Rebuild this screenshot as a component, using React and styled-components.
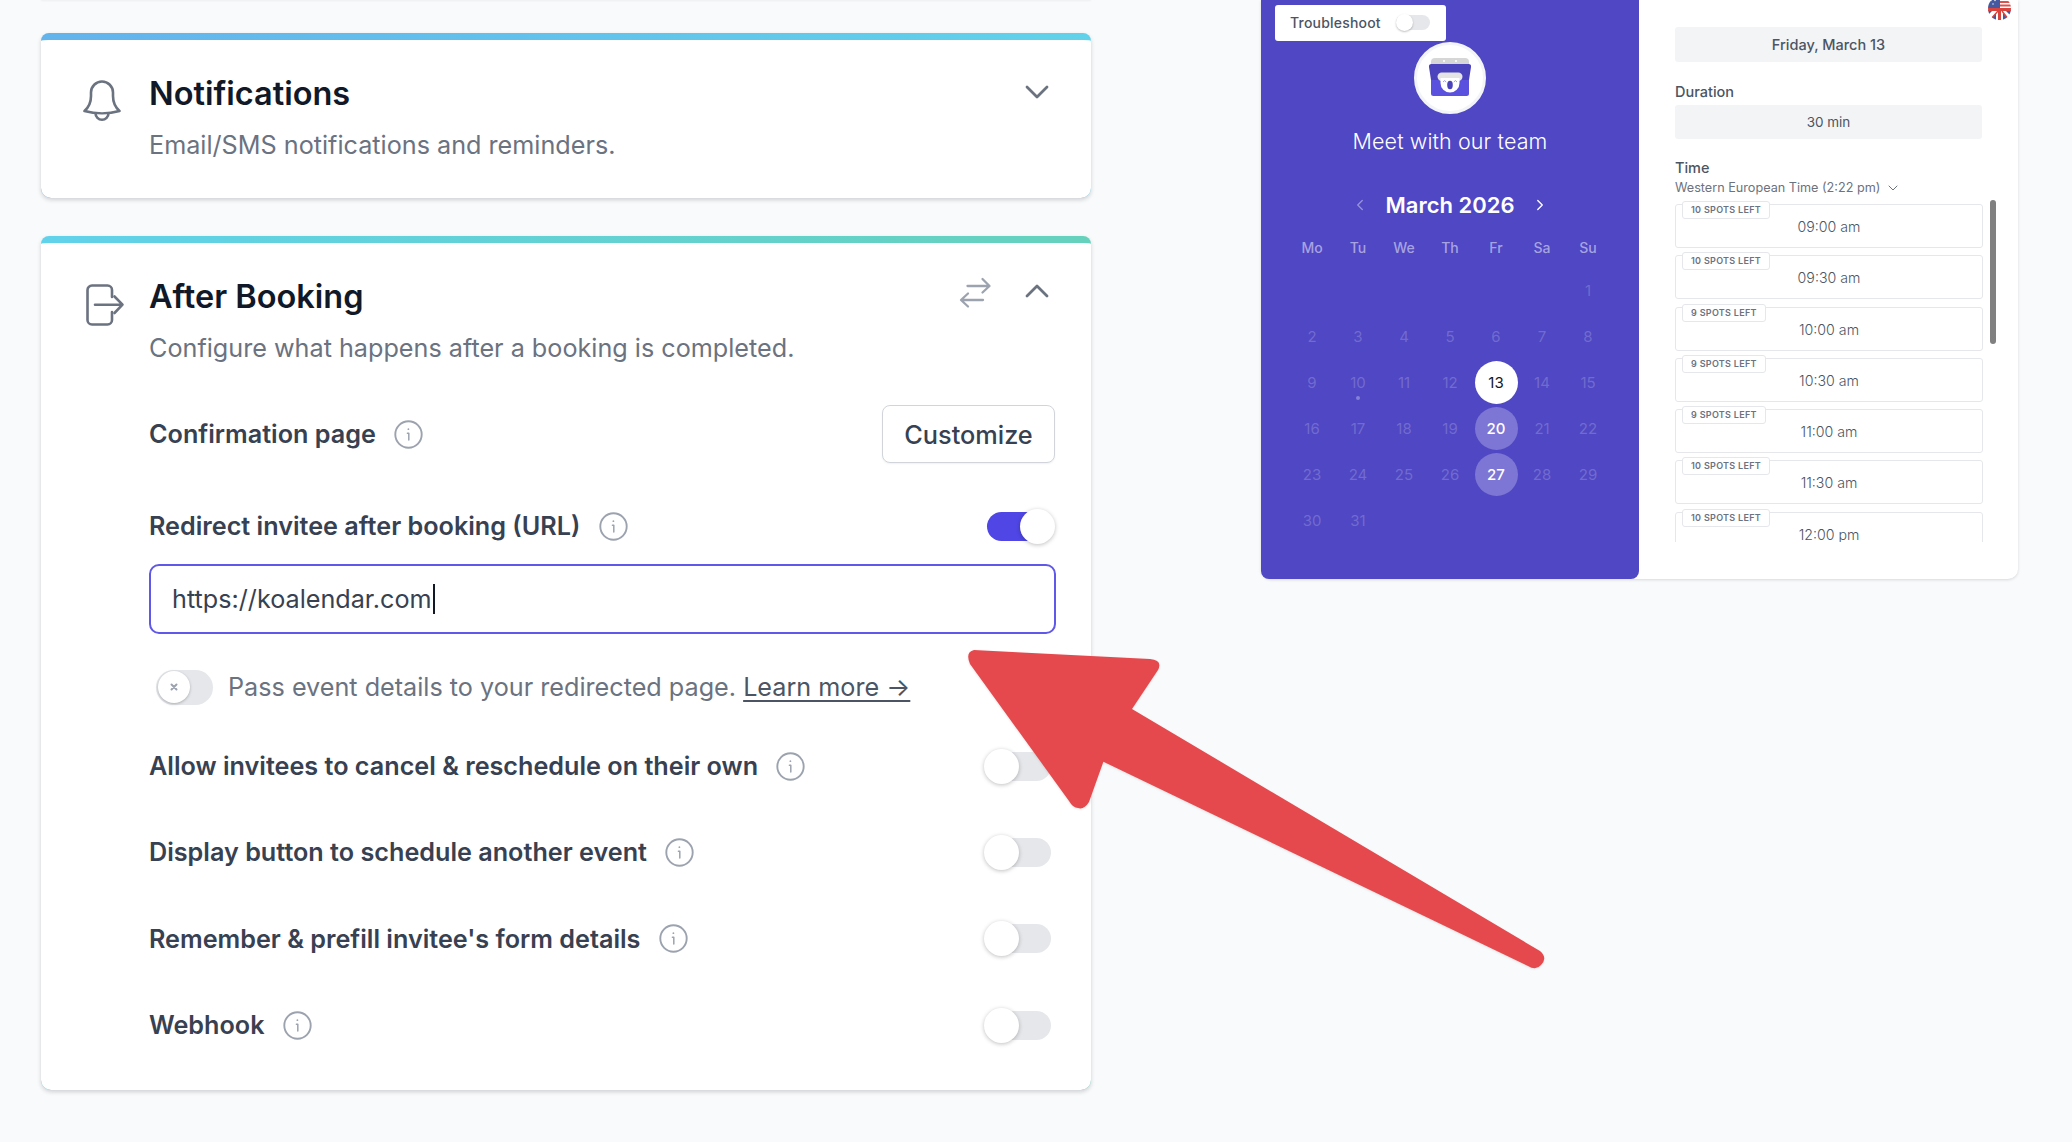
import React from "react";
import styled, { createGlobalStyle } from "styled-components";

const GlobalStyle = createGlobalStyle`
  html, body {
    margin: 0;
    padding: 0;
    background: #f9fafb;
    font-family: Inter, "Noto Sans", "Liberation Sans", sans-serif;
    color: #374151;
  }
  * { box-sizing: border-box; }
`;

const settings = [
  { label: "Allow invitees to cancel & reschedule on their own" },
  { label: "Display button to schedule another event" },
  { label: "Remember & prefill invitee's form details" },
  { label: "Webhook" },
];

const weeks = [
  ["", "", "", "", "", "", "1"],
  ["2", "3", "4", "5", "6", "7", "8"],
  ["9", "10", "11", "12", "13", "14", "15"],
  ["16", "17", "18", "19", "20", "21", "22"],
  ["23", "24", "25", "26", "27", "28", "29"],
  ["30", "31", "", "", "", "", ""],
];

const slots = [
  { time: "09:00 am", spots: 10 },
  { time: "09:30 am", spots: 10 },
  { time: "10:00 am", spots: 9 },
  { time: "10:30 am", spots: 9 },
  { time: "11:00 am", spots: 9 },
  { time: "11:30 am", spots: 10 },
  { time: "12:00 pm", spots: 10 },
];

const Chevron = ({ up, top }) => (
  <ChevronIcon $top={top} viewBox="0 0 24 14" fill="none" stroke="#6b7280" strokeWidth="2.8" strokeLinecap="round" strokeLinejoin="round">
    <path d={up ? "M2 12 L12 2 L22 12" : "M2 2 L12 12 L22 2"} />
  </ChevronIcon>
);

const Info = () => (
  <InfoIcon viewBox="0 0 29 29" fill="none" stroke="#9ca3af">
    <circle cx="14.5" cy="14.5" r="13.2" strokeWidth="1.9" />
    <path d="M13.4 13.2 H14.8 V20" strokeWidth="1.5" strokeLinecap="round" strokeLinejoin="round" />
    <circle cx="14.4" cy="9.2" r="0.9" fill="#9ca3af" stroke="none" />
  </InfoIcon>
);

const Logo = () => (
  <svg width="44" height="44" viewBox="0 0 44 44">
    <rect x="3" y="2" width="38" height="14" rx="4" fill="#d6d6d6" />
    <circle cx="16" cy="5" r="1" fill="#fff" />
    <circle cx="28" cy="5" r="1" fill="#fff" />
    <path d="M3.5 8 H40.5 Q43.4 8 43 11 L41 24 H3 L1 11 Q.6 8 3.5 8 Z" fill="#4b43bb" />
    <path d="M3 24 H41 V37.5 Q41 40 38.5 40 H5.5 Q3 40 3 37.5 Z" fill="#5a52de" />
    <rect x="9.5" y="16.5" width="25" height="8.5" rx="4.2" fill="#e4e4e4" />
    <path d="M12.5 22 H31.5 V27 A9.5 9.5 0 0 1 12.5 27 Z" fill="#fff" />
    <ellipse cx="22" cy="29" rx="2.8" ry="4.2" fill="#4b43bb" />
    <path d="M15 26 l1.6 -1.4 l1.6 1.4 M25.8 26 l1.6 -1.4 l1.6 1.4" stroke="#8d88d8" strokeWidth=".8" fill="none" />
  </svg>
);

const Flag = () => (
  <FlagIcon viewBox="0 0 23 23">
    <defs>
      <clipPath id="flagClip">
        <circle cx="11.5" cy="11.5" r="11.5" />
      </clipPath>
    </defs>
    <g clipPath="url(#flagClip)">
      <rect width="23" height="23" fill="#fff" />
      <rect width="12" height="11" fill="#44599f" />
      <path d="M12 1.5 H23 M12 5 H23 M12 8.5 H23" stroke="#d9544d" strokeWidth="1.8" />
      <path d="M0 13 L5 13 L0 18 Z M23 13 L23 19 L17 13 Z" fill="#44599f" />
      <path d="M8 23 V16 L2 23 Z M15 23 V16 L21 23 Z" fill="#44599f" />
      <path d="M0 12.5 H23 M11.5 11 V23" stroke="#d9443f" strokeWidth="3" />
      <path d="M2 23 L10 14 M21 23 L14 14" stroke="#d9443f" strokeWidth="1.4" />
      <circle cx="3" cy="3.5" r=".7" fill="#fff" />
      <circle cx="7" cy="3.5" r=".7" fill="#fff" />
      <circle cx="5" cy="7" r=".7" fill="#fff" />
    </g>
  </FlagIcon>
);

export default function App() {
  return (
    <>
      <GlobalStyle />
      <Page>
        <PrevCardEdge />
        <LeftColumn>
          <Card>
            <CardHeader>
              <IconSlot>
                <svg width="38" height="41" viewBox="0 0 38 41" fill="none" stroke="#6b7280" strokeWidth="2.6" strokeLinejoin="round" strokeLinecap="round">
                  <path d="M1.5 31 C6 27 8 23 8 16 V12.5 A11 11 0 0 1 30 12.5 V16 C30 23 32 27 36.5 31 C26 34 12 34 1.5 31 Z" />
                  <path d="M12.5 33.2 A6.5 6.5 0 0 0 25.5 33.2" />
                </svg>
              </IconSlot>
              <HeaderText>
                <Title>Notifications</Title>
                <Description>Email/SMS notifications and reminders.</Description>
              </HeaderText>
              <HeaderActions>
                <Chevron top={11} />
              </HeaderActions>
            </CardHeader>
          </Card>

          <Card $second>
            <CardHeader $gap={24}>
              <IconSlot $shift={2}>
                <svg width="40" height="44" viewBox="0 0 40 44" fill="none" stroke="#6b7280" strokeWidth="2.6" strokeLinejoin="round" strokeLinecap="round">
                  <path d="M27 14 V7 A4.5 4.5 0 0 0 22.5 2.5 H7 A4.5 4.5 0 0 0 2.5 7 V37 A4.5 4.5 0 0 0 7 41.5 H22.5 A4.5 4.5 0 0 0 27 37 V29" />
                  <path d="M10 21.7 H37 M29.5 13.5 L37.5 21.7 L29.5 30" />
                </svg>
              </IconSlot>
              <HeaderText>
                <Title>After Booking</Title>
                <Description>Configure what happens after a booking is completed.</Description>
              </HeaderText>
              <HeaderActions>
                <svg width="34" height="32" viewBox="0 0 34 32" fill="none" stroke="#9ca3af" strokeWidth="2.3" strokeLinejoin="round" strokeLinecap="round">
                  <path d="M9.5 9 H31 M24.5 2 L31.5 9 L24.5 15.5" />
                  <path d="M25 23 H3.5 M10 16.5 L3 23 L10 29.5" />
                </svg>
                <Chevron up top={7} />
              </HeaderActions>
            </CardHeader>

            <SettingRow $height={92}>
              <SettingLabel>
                Confirmation page <Info />
              </SettingLabel>
              <CustomizeButton>Customize</CustomizeButton>
            </SettingRow>

            <SettingRow $height={92}>
              <SettingLabel>
                Redirect invitee after booking (URL) <Info />
              </SettingLabel>
              <Toggle $on />
            </SettingRow>

            <UrlField>
              https://koalendar.com
              <Caret />
            </UrlField>

            <PassRow>
              <SmallToggle>
                <SmallKnob>
                  <svg width="10" height="10" viewBox="0 0 10 10" stroke="#9ca3af" strokeWidth="2" strokeLinecap="round">
                    <path d="M2.5 2.5 L7.5 7.5 M7.5 2.5 L2.5 7.5" />
                  </svg>
                </SmallKnob>
              </SmallToggle>
              <PassText>
                Pass event details to your redirected page. <LearnMore>Learn more →</LearnMore>
              </PassText>
            </PassRow>

            <SettingsList>
              {settings.map((s) => (
                <SettingRow key={s.label} $height={86.3}>
                  <SettingLabel>
                    {s.label} <Info />
                  </SettingLabel>
                  <Toggle />
                </SettingRow>
              ))}
            </SettingsList>
          </Card>
        </LeftColumn>

        <Preview>
          <CalendarPane>
            <Troubleshoot>
              Troubleshoot
              <MiniToggle />
            </Troubleshoot>
            <Avatar>
              <Logo />
            </Avatar>
            <MeetTitle>Meet with our team</MeetTitle>
            <MonthNav>
              <MonthArrow viewBox="0 0 10 16" $dim>
                <path d="M8 2 L2 8 L8 14" />
              </MonthArrow>
              <MonthName>March 2026</MonthName>
              <MonthArrow viewBox="0 0 10 16">
                <path d="M2 2 L8 8 L2 14" />
              </MonthArrow>
            </MonthNav>
            <CalendarGrid>
              {["Mo", "Tu", "We", "Th", "Fr", "Sa", "Su"].map((d) => (
                <WeekDay key={d}>{d}</WeekDay>
              ))}
              {weeks.flat().map((d, i) => (
                <DayCell key={i}>
                  {d && (
                    <Day $state={d === "13" ? "selected" : d === "20" || d === "27" ? "open" : "off"}>
                      {d}
                      {d === "10" && <TodayDot />}
                    </Day>
                  )}
                </DayCell>
              ))}
            </CalendarGrid>
          </CalendarPane>

          <TimePane>
            <Flag />
            <DateBox>Friday, March 13</DateBox>
            <FieldLabel>Duration</FieldLabel>
            <DurationBox>30 min</DurationBox>
            <TimeLabel>Time</TimeLabel>
            <ZoneRow>
              Western European Time (2:22 pm)
              <svg width="10" height="6" viewBox="0 0 10 6" fill="none" stroke="#6b7280" strokeWidth="1" strokeLinecap="round">
                <path d="M1 1 L5 5 L9 1" />
              </svg>
            </ZoneRow>
            <SlotScroller>
              {slots.map((s) => (
                <Slot key={s.time}>
                  <SpotsBadge>{s.spots} spots left</SpotsBadge>
                  {s.time}
                </Slot>
              ))}
            </SlotScroller>
            <ScrollThumb />
          </TimePane>
        </Preview>

        <ArrowOverlay viewBox="0 0 2072 1142">
          <path
            d="M974 650 L1150 659 Q1163 660 1158 670 L1132 709 L1540 951 Q1548 958 1541 965 Q1536 971 1528 966 L1103.4 761.7 L1089 802 Q1084 810 1078 808 Q1073 808 1069 801 L970 664 Q965 652 974 650 Z"
            fill="#e5494d"
          />
        </ArrowOverlay>
      </Page>
    </>
  );
}

const Page = styled.div`
  position: relative;
  display: flex;
  align-items: flex-start;
  width: 2072px;
  height: 1142px;
  padding-left: 41px;
  overflow: hidden;
`;

const PrevCardEdge = styled.div`
  position: absolute;
  top: -10px;
  left: 41px;
  width: 1050px;
  height: 10px;
  background: #fff;
  box-shadow: 0 1px 2px rgba(17, 24, 39, 0.05);
`;

const LeftColumn = styled.div`
  display: flex;
  flex-direction: column;
  gap: 38px;
  width: 1050px;
  padding-top: 33px;
`;

const Card = styled.section`
  background: #fff;
  border-top: 7px solid transparent;
  border-radius: 10px;
  border-top-left-radius: 8px;
  border-top-right-radius: 8px;
  background-image: linear-gradient(#fff, #fff),
    linear-gradient(90deg, ${(p) => (p.$second ? "#60d2ea, #66d1bd" : "#63b3ed, #61d2ea")});
  background-origin: border-box;
  background-clip: padding-box, border-box;
  box-shadow: 0 2px 4px rgba(17, 24, 39, 0.18);
  padding: 0 35px ${(p) => (p.$second ? "21px" : "0")} 42px;
  min-height: ${(p) => (p.$second ? "854px" : "165px")};
`;

const CardHeader = styled.div`
  display: flex;
  align-items: flex-start;
  padding-top: 34px;
  margin-bottom: ${(p) => p.$gap || 0}px;
`;

const IconSlot = styled.div`
  width: 66px;
  flex: none;
  padding-top: 6px;
  padding-left: ${(p) => p.$shift || 0}px;
`;

const HeaderText = styled.div`
  flex: 1;
`;

const Title = styled.h2`
  margin: 0;
  font-size: 32.5px;
  line-height: 40px;
  font-weight: 600;
  color: #111827;
`;

const Description = styled.p`
  margin: 15px 0 0;
  font-size: 25.2px;
  line-height: 32px;
  font-weight: 400;
  color: #6b7280;
`;

const HeaderActions = styled.div`
  display: flex;
  align-items: flex-start;
  gap: 33px;
  margin-right: 7px;
`;

const ChevronIcon = styled.svg`
  width: 24px;
  height: 14px;
  margin-top: ${(p) => p.$top}px;
`;

const InfoIcon = styled.svg`
  width: 29px;
  height: 29px;
  margin-left: 12px;
  flex: none;
`;

const SettingRow = styled.div`
  display: flex;
  align-items: center;
  justify-content: space-between;
  height: ${(p) => p.$height}px;
  margin-left: 66px;
`;

const SettingLabel = styled.div`
  display: flex;
  align-items: center;
  white-space: pre;
  font-size: 25.2px;
  font-weight: 600;
  color: #374151;
`;

const CustomizeButton = styled.button`
  width: 173px;
  height: 58px;
  margin-right: 1px;
  background: #fff;
  border: 1.5px solid #d1d5db;
  border-radius: 8px;
  box-shadow: 0 1px 2px rgba(0, 0, 0, 0.06);
  font: 500 25.3px Inter, sans-serif;
  color: #374151;
`;

const Toggle = styled.div`
  position: relative;
  width: 64px;
  height: 29px;
  margin-right: 5px;
  border-radius: 15px;
  background: ${(p) => (p.$on ? "#4f46e5" : "#e5e7eb")};
  &::after {
    content: "";
    position: absolute;
    top: -3px;
    left: ${(p) => (p.$on ? "33px" : "-3px")};
    width: 35px;
    height: 35px;
    border-radius: 50%;
    background: #fff;
    box-shadow: 0 1px 4px rgba(0, 0, 0, 0.25);
  }
`;

const UrlField = styled.div`
  display: flex;
  align-items: center;
  height: 70px;
  margin-left: 66px;
  padding-left: 21px;
  border: 2.5px solid #6058e6;
  border-radius: 10px;
  font-size: 25.2px;
  color: #374151;
  margin-top: -8px;
`;

const Caret = styled.span`
  width: 2px;
  height: 30px;
  margin-left: 1px;
  background: #111827;
`;

const PassRow = styled.div`
  display: flex;
  align-items: center;
  height: 36px;
  margin: 35px 0 0 73px;
`;

const SmallToggle = styled.div`
  position: relative;
  width: 57px;
  height: 35px;
  border-radius: 18px;
  background: #e5e7eb;
  flex: none;
`;

const SmallKnob = styled.span`
  position: absolute;
  top: 1.5px;
  left: 1.5px;
  display: flex;
  align-items: center;
  justify-content: center;
  width: 32px;
  height: 32px;
  border-radius: 50%;
  background: #fff;
  box-shadow: 0 1px 3px rgba(0, 0, 0, 0.25);
`;

const PassText = styled.span`
  margin-left: 15px;
  font-size: 25.2px;
  color: #6b7280;
  white-space: pre;
`;

const LearnMore = styled.span`
  color: #4b5563;
  text-decoration: underline;
  text-underline-offset: 4px;
`;

const SettingsList = styled.div`
  margin-top: 18px;
`;

const Preview = styled.div`
  display: flex;
  width: 757px;
  height: 579px;
  margin-left: 170px;
  background: #fff;
  border-radius: 0 0 10px 10px;
  box-shadow: 0 1px 3px rgba(17, 24, 39, 0.15);
`;

const CalendarPane = styled.div`
  position: relative;
  width: 378px;
  flex: none;
  background: #4f47c3;
  border-radius: 0 0 8px 8px;
  display: flex;
  flex-direction: column;
  align-items: center;
  padding-top: 42px;
`;

const Troubleshoot = styled.div`
  position: absolute;
  top: 5px;
  left: 14px;
  display: flex;
  align-items: center;
  justify-content: space-between;
  width: 171px;
  height: 36px;
  padding: 0 16px 1px 15px;
  background: #fff;
  border-radius: 3px;
  font-size: 14px;
  font-weight: 500;
  letter-spacing: 0.2px;
  color: #4b5563;
`;

const MiniToggle = styled.span`
  position: relative;
  width: 34px;
  height: 15px;
  border-radius: 8px;
  background: #e5e7eb;
  &::after {
    content: "";
    position: absolute;
    top: -1px;
    left: 0;
    width: 17px;
    height: 17px;
    border-radius: 50%;
    background: #fff;
    box-shadow: 0 1px 2px rgba(0, 0, 0, 0.25);
  }
`;

const Avatar = styled.div`
  display: flex;
  align-items: center;
  justify-content: center;
  width: 72px;
  height: 72px;
  border-radius: 50%;
  background: #fff;
  border: 3px solid #f3f4f6;
`;

const MeetTitle = styled.div`
  margin-top: 12px;
  height: 30px;
  font-size: 21.5px;
  line-height: 30px;
  font-weight: 300;
  color: #fff;
  letter-spacing: 0.1px;
`;

const MonthNav = styled.div`
  display: flex;
  align-items: center;
  justify-content: center;
  gap: 21px;
  margin-top: 34px;
  height: 30px;
`;

const MonthName = styled.div`
  font-size: 22px;
  font-weight: 600;
  color: #fff;
  white-space: nowrap;
`;

const MonthArrow = styled.svg`
  width: 8px;
  height: 12px;
  fill: none;
  stroke: #fff;
  stroke-width: 1.8;
  stroke-linecap: round;
  stroke-linejoin: round;
  opacity: ${(p) => (p.$dim ? 0.4 : 1)};
`;

const CalendarGrid = styled.div`
  display: grid;
  grid-template-columns: repeat(7, 46px);
  grid-template-rows: 41.4px repeat(6, 46px);
  margin-top: 6px;
`;

const WeekDay = styled.div`
  display: flex;
  align-items: center;
  justify-content: center;
  padding-top: 2px;
  font-size: 14px;
  font-weight: 500;
  color: #a7a3e1;
`;

const DayCell = styled.div`
  display: flex;
  align-items: center;
  justify-content: center;
`;

const Day = styled.span`
  position: relative;
  display: flex;
  align-items: center;
  justify-content: center;
  width: 43px;
  height: 43px;
  border-radius: 50%;
  font-size: 15px;
  font-weight: ${(p) => (p.$state === "open" ? 500 : 400)};
  color: ${(p) => (p.$state === "selected" ? "#111827" : p.$state === "open" ? "#fff" : "#726bcf")};
  background: ${(p) => (p.$state === "selected" ? "#fff" : p.$state === "open" ? "#7d76d4" : "transparent")};
`;

const TodayDot = styled.i`
  position: absolute;
  left: 19.5px;
  bottom: 4px;
  width: 4px;
  height: 4px;
  border-radius: 50%;
  background: #8580d8;
`;

const TimePane = styled.div`
  position: relative;
  flex: 1;
  padding: 27px 0 0 36px;
`;

const FlagIcon = styled.svg`
  position: absolute;
  top: -3px;
  right: 7px;
  width: 23px;
  height: 23px;
`;

const DateBox = styled.div`
  display: flex;
  align-items: center;
  justify-content: center;
  width: 307px;
  height: 35px;
  background: #f3f4f6;
  border-radius: 3px;
  font-size: 14.5px;
  font-weight: 500;
  color: #4b5563;
`;

const FieldLabel = styled.div`
  margin-top: 21px;
  height: 18px;
  font-size: 14.5px;
  line-height: 18px;
  font-weight: 500;
  color: #4b5563;
`;

const DurationBox = styled.div`
  display: flex;
  align-items: center;
  justify-content: center;
  width: 307px;
  height: 34px;
  margin-top: 4px;
  background: #f3f4f6;
  border-radius: 3px;
  font-size: 13.5px;
  color: #4b5563;
`;

const TimeLabel = styled(FieldLabel)`
  margin-top: 20px;
`;

const ZoneRow = styled.div`
  display: flex;
  align-items: center;
  gap: 8px;
  height: 18px;
  margin-top: 2px;
  font-size: 12.65px;
  line-height: 18px;
  color: #6b7280;
  white-space: nowrap;
`;

const SlotScroller = styled.div`
  height: 341px;
  width: 310px;
  margin-top: 4px;
  padding-top: 3px;
  overflow: hidden;
`;

const Slot = styled.div`
  position: relative;
  display: flex;
  align-items: flex-end;
  justify-content: center;
  width: 308px;
  height: 44px;
  margin-bottom: 7.3px;
  padding-bottom: 10px;
  border: 1px solid #e5e7eb;
  border-radius: 3px;
  font-size: 14.2px;
  line-height: 20px;
  font-weight: 300;
  color: #4b5563;
`;

const SpotsBadge = styled.span`
  position: absolute;
  top: -4px;
  left: 6px;
  height: 18px;
  padding: 0 8px;
  background: #fff;
  border: 1px solid #e5e7eb;
  border-radius: 3px;
  font-size: 9px;
  line-height: 16px;
  font-weight: 600;
  letter-spacing: 0.3px;
  text-transform: uppercase;
  color: #6b7280;
`;

const ScrollThumb = styled.span`
  position: absolute;
  top: 200px;
  left: 351px;
  width: 6px;
  height: 144px;
  border-radius: 3px;
  background: #808080;
`;

const ArrowOverlay = styled.svg`
  position: absolute;
  top: 0;
  left: 0;
  width: 2072px;
  height: 1142px;
  pointer-events: none;
  filter: drop-shadow(0 1px 1px rgba(0, 0, 0, 0.1));
`;
